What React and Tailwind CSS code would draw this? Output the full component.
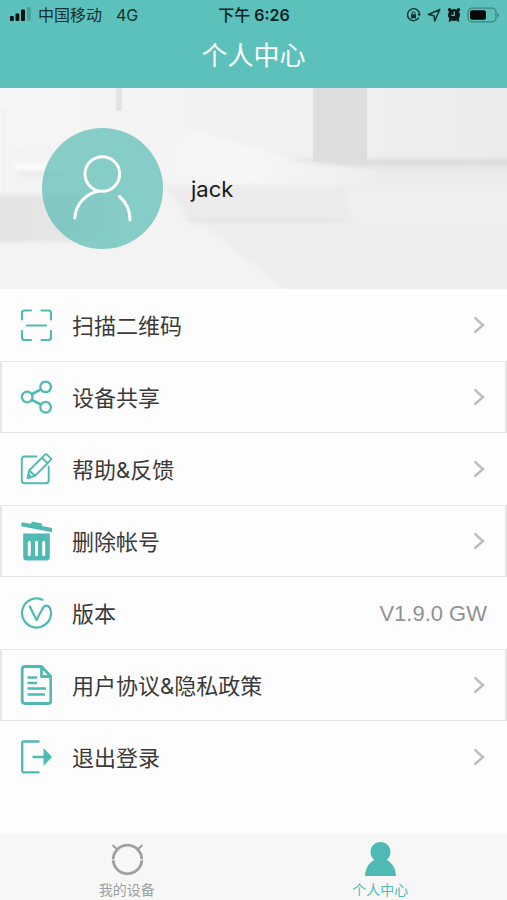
import clsx from 'clsx';

const menuItems = [
  { id: 'scan', label: '扫描二维码', icon: ScanIcon },
  { id: 'share', label: '设备共享', icon: ShareIcon },
  { id: 'help', label: '帮助&反馈', icon: EditIcon },
  { id: 'delete', label: '删除帐号', icon: TrashIcon },
  { id: 'version', label: '版本', icon: VersionIcon, value: 'V1.9.0 GW' },
  { id: 'policy', label: '用户协议&隐私政策', icon: DocumentIcon },
  { id: 'logout', label: '退出登录', icon: LogoutIcon },
];

function ScanIcon() {
  return (
    <svg className="w-8 h-10" viewBox="0 0 32 40" fill="none" stroke="currentColor" strokeWidth="2.200" strokeLinecap="round">
      <path d="M2 14.500V8q0-2.500 2.500-2.500H11M21.500 5.500H28.500q2.500 0 2.500 2.500v6.500M31 26V32.500q0 2.500-2.500 2.500H21.500M11 35H4.500Q2 35 2 32.500v-6.500M7 20.500H26" />
    </svg>
  );
}

function ShareIcon() {
  return (
    <svg className="w-8 h-10" viewBox="0 0 32 40" fill="none" stroke="currentColor" strokeWidth="2.300">
      <circle cx="7.200" cy="20" r="5.300" />
      <circle cx="25.600" cy="9.900" r="5.300" />
      <circle cx="25.600" cy="30.200" r="5.300" />
      <path d="M11.800 17.300 21 12.400M11.600 22.800 21 27.600" strokeWidth="2.700" />
    </svg>
  );
}

function EditIcon() {
  return (
    <svg className="w-8 h-10" viewBox="0 0 32 40" fill="none" stroke="currentColor" strokeWidth="1.900" strokeLinejoin="round" strokeLinecap="round">
      <path d="M16.500 7.500H4.500Q1.800 7.500 1.800 10.200V31.500Q1.800 34.200 4.500 34.200H26Q28.700 34.200 28.700 31.500V17.500" />
      <path d="M7.700 29 9.200 21.500 25 5.700Q26 4.700 27.200 5.800L30.600 9.200Q31.600 10.200 30.600 11.200L15 26.800ZM9.200 21.500 15 26.800M22 8.700 27.700 14.200" />
      <path d="M7.700 29 8.500 25.500 11.200 28.100Z" fill="currentColor" />
    </svg>
  );
}

function TrashIcon() {
  return (
    <svg className="w-8 h-10" viewBox="0 0 32 40" fill="currentColor">
      <path d="M1.700 1.200 11 2.700 12 .5 22 2.500 22 5 32 7 32 11.200 1.200 5.300Z" />
      <path fillRule="evenodd" d="M3.200 12.500H29.800V36Q29.800 39.500 26.500 39.500H6.500Q3.200 39.500 3.200 36ZM7.800 21.500V33.500Q7.800 35.300 9.300 35.300T10.800 33.500V21.500Q10.800 19.700 9.300 19.700T7.800 21.500ZM15 21.500V33.500Q15 35.300 16.500 35.300T18 33.500V21.500Q18 19.700 16.500 19.700T15 21.500ZM22.200 21.500V33.500Q22.200 35.300 23.700 35.300T25.200 33.500V21.500Q25.200 19.700 23.700 19.700T22.200 21.500Z" />
    </svg>
  );
}

function VersionIcon() {
  return (
    <svg className="w-8 h-10" viewBox="0 0 32 40" fill="none" stroke="currentColor" strokeWidth="2.200" strokeLinecap="round" strokeLinejoin="round">
      <path d="M22.500 6.800A14.500 14.500 0 1 0 31 20.500Q30.700 12.600 26.300 12.600Q24 12.600 22.600 15.600L16.500 27L9.800 13.500" />
    </svg>
  );
}

function DocumentIcon() {
  return (
    <svg className="w-8 h-10" viewBox="0 0 32 40" fill="none" stroke="currentColor" strokeWidth="2.800" strokeLinejoin="round">
      <path d="M21.500 1.500H5Q2.200 1.500 2.200 4.500V35.500Q2.200 38.500 5 38.500H28Q30.800 38.500 30.800 35.500V11.500ZM21.500 1.500V11.500H30.800" />
      <path d="M7.500 12.500H17M7.500 18H17M7.500 23.500H26M7.500 29.500H25" strokeWidth="2.400" />
    </svg>
  );
}

function LogoutIcon() {
  return (
    <svg className="w-8 h-10" viewBox="0 0 32 40" fill="none" stroke="currentColor" strokeWidth="2.300">
      <path d="M19.500 4.500H3.500Q2.200 4.500 2.200 6V34Q2.200 35.300 3.500 35.300H19.500M12.500 20H24" />
      <path d="M23.500 11 32 20 23.500 29Z" fill="currentColor" stroke="none" />
    </svg>
  );
}

function Chevron() {
  return (
    <svg className="w-3 h-5 mr-0.5 shrink-0 text-[#bdbdbd]" viewBox="0 0 12 20" fill="none" stroke="currentColor" strokeWidth="2.400">
      <path d="M1.500 2.500 10 10 1.500 17.500" />
    </svg>
  );
}

function StatusBar() {
  return (
    <div className="grid grid-cols-3 items-center h-[30px] pl-[9px] pr-2 text-[#12302f] text-base leading-5">
      <div className="flex items-center whitespace-nowrap">
        <svg className="w-[22px] h-4 shrink-0" viewBox="0 0 22 16">
          <g fill="#0a1212">
            <rect x="1" y="9" width="3.800" height="5" rx="1" />
            <rect x="6.500" y="6.500" width="3.800" height="7.500" rx="1" />
            <rect x="12" y="2.500" width="4" height="11.500" rx="1" />
          </g>
          <rect x="18" y="0" width="3.800" height="14" rx="1" fill="#46a09b" />
        </svg>
        <span className="ml-[7px]">中国移动</span>
        <span className="ml-3.5">4G</span>
      </div>
      <p className="text-center font-semibold text-[#0d2524] whitespace-nowrap">
        <span className="font-medium">下午</span> 6:26
      </p>
      <div className="flex items-center justify-end gap-1.5">
        {/* rotation lock */}
        <svg className="w-[15px] h-4" viewBox="0 0 15 16" fill="none" stroke="currentColor" strokeWidth="1.400">
          <path d="M12.800 10.600A6 6 0 1 1 13.500 7" />
          <path d="M11.500 7h3.500L13.300 9.500Z" fill="currentColor" stroke="none" />
          <rect x="5" y="7.300" width="5" height="4" fill="currentColor" stroke="none" />
          <path d="M6 7.500V6.300a1.500 1.500 0 0 1 3 0V7.500" strokeWidth="1" />
        </svg>
        {/* location */}
        <svg className="w-3.5 h-4" viewBox="0 0 14 16" fill="none" stroke="currentColor" strokeWidth="1.500" strokeLinejoin="round">
          <path d="M12.800 2.500 1.500 7.500 7 8.700 7.700 14Z" />
        </svg>
        {/* alarm */}
        <svg className="w-3.5 h-4" viewBox="0 0 14 16" fill="#0d1a1a">
          <circle cx="7" cy="8" r="6" />
          <circle cx="2.500" cy="2.700" r="1.700" />
          <circle cx="11.500" cy="2.700" r="1.700" />
          <path d="M2.500 11 1.500 14.500H4.500ZM11.500 11l1 3.500H9.500Z" />
          <path d="M7.200 4.500V8.300H4.300" fill="none" stroke="#5dc1bb" strokeWidth="1.200" />
        </svg>
        <svg className="w-8 h-4" viewBox="0 0 32 16">
          <rect x="1" y="1.200" width="28" height="13.600" rx="4" fill="none" stroke="#3a8783" strokeWidth="1.300" />
          <rect x="3" y="3.200" width="16" height="9.600" rx="2" fill="#050808" />
          <path d="M30.300 6V10.500Q32 9.500 32 8.200T30.300 6Z" fill="#3a8783" />
        </svg>
      </div>
    </div>
  );
}

// Soft grey room behind the avatar
function RoomBackdrop() {
  return (
    <svg className="absolute inset-0 w-full h-full" viewBox="0 0 507 201" preserveAspectRatio="xMidYMid slice" aria-hidden="true">
      <defs>
        <linearGradient id="wall" x1="0" x2="1">
          <stop offset="0" stopColor="#f6f6f6" />
          <stop offset="0.550" stopColor="#f1f1f1" />
          <stop offset="1" stopColor="#ebebeb" />
        </linearGradient>
        <linearGradient id="sofaShade" x1="0" x2="1">
          <stop offset="0" stopColor="#e3e3e3" />
          <stop offset="0.600" stopColor="#e6e6e6" />
          <stop offset="1" stopColor="#f3f3f3" />
        </linearGradient>
        <linearGradient id="floor" x1="0" x2="0" y1="0" y2="1">
          <stop offset="0" stopColor="#e9e9e9" />
          <stop offset="0.250" stopColor="#f1f1f1" />
          <stop offset="0.450" stopColor="#eeeeee" />
          <stop offset="1" stopColor="#eeeeee" />
        </linearGradient>
        <linearGradient id="bedTop" x1="0" x2="1">
          <stop offset="0" stopColor="#f4f4f4" />
          <stop offset="0.400" stopColor="#f6f6f6" />
          <stop offset="1" stopColor="#efefef" />
        </linearGradient>
        <linearGradient id="bedEdge" x1="0" x2="1">
          <stop offset="0" stopColor="#e5e5e5" />
          <stop offset="0.800" stopColor="#e3e3e3" />
          <stop offset="1" stopColor="#eeeeee" />
        </linearGradient>
        <filter id="soft" x="-10%" y="-10%" width="120%" height="120%">
          <feGaussianBlur stdDeviation="2" />
        </filter>
      </defs>
      <rect width="507" height="201" fill="url(#wall)" />
      <g filter="url(#soft)">
        <path d="M160 76H520V230H160Z" fill="url(#floor)" />
        <path d="M-10 150H100L165 95 200 135 285 201 320 230H-10Z" fill="#f3f3f3" />
        <path d="M155 50 200 44 290 70 380 84 350 100H165Z" fill="url(#bedTop)" />
        <path d="M165 97H345L352 130H188Z" fill="#ececec" />
        <path d="M184 130H360V135H190Z" fill="url(#bedEdge)" />
        <path d="M-5 107H125V154H-5Z" fill="url(#sofaShade)" />
        <path d="M12 62Q14 58 24 58H110V107H12Z" fill="#f3f3f3" />
        <rect x="14" y="75" width="52" height="8" rx="4" fill="#fbfbfb" />
        <rect x="18" y="83" width="48" height="4" fill="#e8e8e8" />
        <rect x="2" y="20" width="6" height="85" fill="#f1f1ef" />
        <path d="M285 71H520V78H345Z" fill="#dcdcdc" />
      </g>
      <rect x="313" y="0" width="54" height="73" fill="#dddddd" />
      <rect x="116" y="0" width="6" height="23" fill="#e4e4e4" />
    </svg>
  );
}

function Profile({ name }) {
  return (
    <section className="relative h-[201px] overflow-hidden">
      <RoomBackdrop />
      <div className="relative flex items-center h-full gap-7 pl-[42px]">
        <div className="w-[121px] h-[121px] rounded-full bg-[#4bb8b1]/65">
          <svg className="w-full h-full" viewBox="0 0 121 121" fill="none" stroke="#fff" strokeWidth="3" strokeLinecap="round">
            <circle cx="60.300" cy="46" r="17.300" />
            <path d="M32.700 90C34 76 43 66 56 63.200" />
            <path d="M77.500 68.500C84 74 88 82 88 92" />
          </svg>
        </div>
        <p className="text-[22px] leading-8 text-[#1a1a1a]">{name}</p>
      </div>
    </section>
  );
}

function MenuRow({ item, framed }) {
  const Icon = item.icon;
  const rowClass = clsx(
    'flex items-center w-full h-[72px] px-[18px] border-x-2 border-y text-left',
    framed ? 'border-[#e6e6e6]' : 'border-transparent'
  );
  const content = (
    <>
      <span className="text-[#4fbab4] shrink-0"><Icon /></span>
      <span className="flex-1 ml-5 pt-0.5 text-[22px] leading-8 text-[#3a3a3a]">{item.label}</span>
    </>
  );

  if (item.value) return (
    <div className={rowClass}>
      {content}
      <span className="pt-0.5 text-[22px] leading-8 text-[#929292] font-[Liberation_Sans,sans-serif]">{item.value}</span>
    </div>
  );

  return (
    <button type="button" className={rowClass}>
      {content}
      <Chevron />
    </button>
  );
}

function TabBar() {
  return (
    <nav className="flex h-[66px] bg-[#f7f7f7] text-sm leading-5">
      <a href="#devices" className="flex-1 flex flex-col items-center pt-1.5 text-[#a0a0a0]">
        <svg className="w-10 h-10" viewBox="0 0 40 40" fill="none" stroke="currentColor">
          <circle cx="20.500" cy="19.500" r="14.300" strokeWidth="2.800" />
          <path d="M5.500 5 10 9.300M35.500 5 31 9.300" strokeWidth="2" />
          <path d="M4.500 19.800H8.500M32.500 19.800H36.500" stroke="#f7f7f7" strokeWidth="1" />
        </svg>
        <span>我的设备</span>
      </a>
      <a href="#me" aria-current="page" className="flex-1 flex flex-col items-center pt-1.5 text-[#4fbab4]">
        <svg className="w-10 h-10" viewBox="0 0 40 40" fill="currentColor">
          <path d="M20.500 2C26.500 2 30.500 6.500 30.500 12C30.500 15.500 29 18 26.500 20C32 22.500 35.500 28 36 36H5C5.500 28 9 22.500 14.500 20C12 18 10.500 15.500 10.500 12C10.500 6.500 14.500 2 20.500 2Z" />
        </svg>
        <span>个人中心</span>
      </a>
    </nav>
  );
}

function App() {
  return (
    <div className="min-h-screen flex flex-col bg-[#fdfdfd] font-[Inter,'Noto_Sans_CJK_SC',sans-serif]">
      <header className="h-[88px] bg-[#5dc1bb]">
        <StatusBar />
        <h1 className="pt-1.5 text-center text-[26px] leading-10 text-white">个人中心</h1>
      </header>

      <Profile name="jack" />

      <main className="flex-1">
        {menuItems.map((item, i) => (
          <MenuRow key={item.id} item={item} framed={i % 2 === 1} />
        ))}
      </main>

      <TabBar />
    </div>
  );
}

export default App;
